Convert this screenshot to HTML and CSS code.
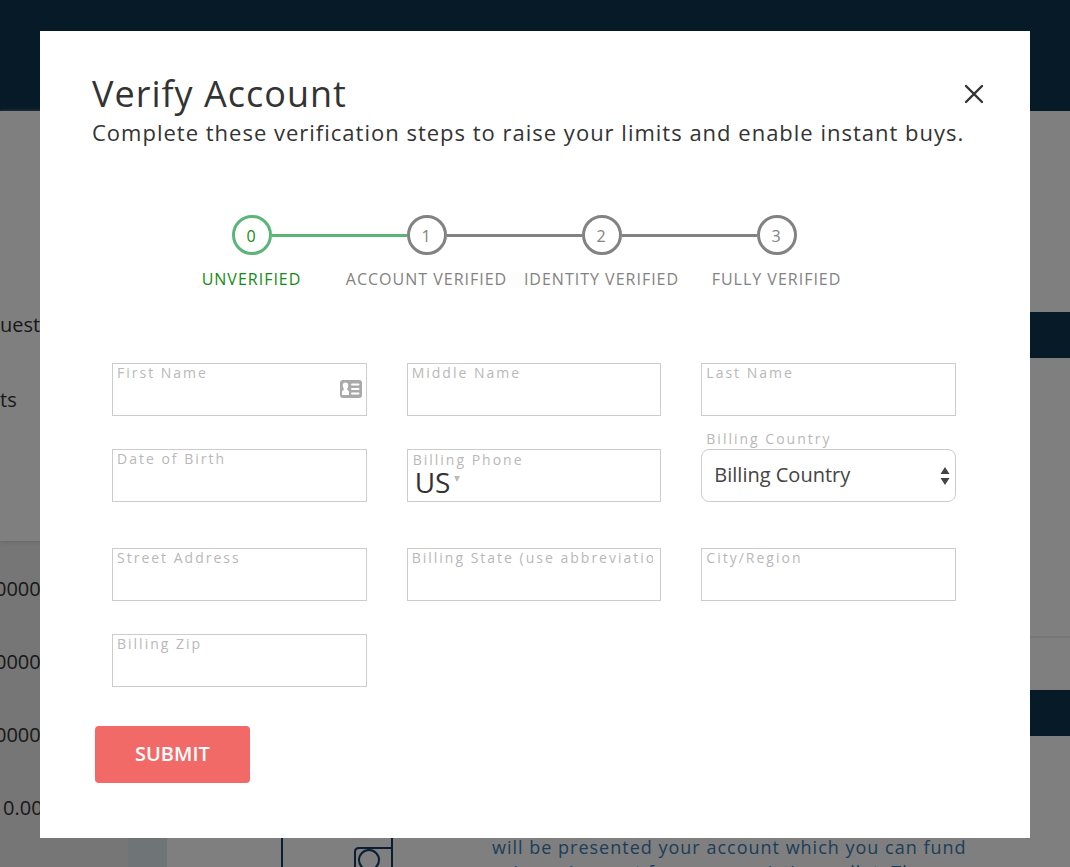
FILE: index.html
```html
<!DOCTYPE html>
<html lang="en">

<head>
    <meta charset="UTF-8">
    <meta name="viewport" content="width=device-width, initial-scale=1.0">
    <title>Verify Account</title>
    <link rel="stylesheet" href="styles.css">
</head>

<body>
    <!-- Page behind the dialog -->
    <div class="page">
        <header class="topbar"></header>
        <div class="columns">
            <aside class="sidebar">
                <nav class="side-nav">
                    <a href="#">uest</a>
                    <a href="#">ts</a>
                </nav>
                <ul class="balances">
                    <li>00000</li>
                    <li>00000</li>
                    <li>00000</li>
                    <li class="total">0.00</li>
                </ul>
            </aside>
            <div class="gutter"></div>
            <main class="content">
                <section class="panel panel-first">
                    <div class="panel-head"></div>
                </section>
                <section class="panel">
                    <div class="panel-head"></div>
                    <div class="panel-body">
                        <svg class="wallet" viewBox="0 0 114 60" fill="none" stroke="#123c64" stroke-width="2">
                            <path d="M2 0V60M112 0V60M112 20H79Q75 20 75 24V60" />
                            <circle cx="89" cy="32" r="10" />
                        </svg>
                        <p>will be presented your account which you can fund using coins sent from your existing wallet. The</p>
                    </div>
                </section>
            </main>
        </div>
    </div>

    <!-- Dialog -->
    <div class="overlay">
        <div class="modal" role="dialog" aria-labelledby="modalTitle">
            <div class="modal-header">
                <h1 id="modalTitle">Verify Account</h1>
                <button type="button" class="close" aria-label="Close">
                    <svg width="20" height="20" viewBox="0 0 20 20" fill="none" stroke="#333" stroke-width="2.4" stroke-linecap="round">
                        <path d="M2 2L18 18M18 2L2 18" />
                    </svg>
                </button>
            </div>
            <p class="subtitle">Complete these verification steps to raise your limits and enable instant buys.</p>

            <ol class="steps">
                <li class="step active"><span class="mark"><span class="circle">0</span></span>Unverified</li>
                <li class="step"><span class="mark"><span class="circle">1</span></span>Account verified</li>
                <li class="step"><span class="mark"><span class="circle">2</span></span>Identity verified</li>
                <li class="step"><span class="mark"><span class="circle">3</span></span>Fully verified</li>
            </ol>

            <form>
                <div class="fields">
                    <div class="field">
                        <label for="firstName">First Name</label>
                        <input type="text" id="firstName">
                        <svg class="card-icon" width="22" height="18" viewBox="0 0 22 18">
                            <rect width="22" height="18" rx="3" fill="#a9a9a9" />
                            <path fill="#fff" d="M5.500 2.500C7.300 2.500 8.300 3.700 8.300 5.500C8.300 6.800 7.800 7.500 7.300 8.200V10C8.500 10.500 9 11 9 12V15H2V12C2 11 2.500 10.500 3.700 10V8.200C3.200 7.500 2.700 6.800 2.700 5.500C2.700 3.700 3.700 2.500 5.500 2.500Z" />
                            <path stroke="#fff" stroke-width="2" stroke-linecap="round" d="M12 4.500H18.500M12 9H18.500M12 13.500H18.500" />
                        </svg>
                    </div>
                    <div class="field">
                        <label for="middleName">Middle Name</label>
                        <input type="text" id="middleName">
                    </div>
                    <div class="field">
                        <label for="lastName">Last Name</label>
                        <input type="text" id="lastName">
                    </div>
                    <div class="field">
                        <label for="birthDate">Date of Birth</label>
                        <input type="text" id="birthDate">
                    </div>
                    <div class="field phone">
                        <label for="phone">Billing Phone</label>
                        <select class="dial" aria-label="Phone country">
                            <option>US</option>
                        </select>
                        <svg width="8" height="7" viewBox="0 0 8 7">
                            <path fill="#bbb" d="M1 0H7L4 6Z" />
                        </svg>
                        <input type="tel" id="phone">
                    </div>
                    <div class="field country">
                        <label for="country">Billing Country</label>
                        <select id="country">
                            <option>Billing Country</option>
                        </select>
                        <svg class="arrows" width="10" height="18" viewBox="0 0 10 18">
                            <path fill="#444" d="M5 0L9.500 7H.5ZM.5 11H9.500L5 18Z" />
                        </svg>
                    </div>
                </div>
                <div class="fields">
                    <div class="field">
                        <label for="street">Street Address</label>
                        <input type="text" id="street">
                    </div>
                    <div class="field">
                        <label for="state">Billing State (use abbreviation)</label>
                        <input type="text" id="state">
                    </div>
                    <div class="field">
                        <label for="city">City/Region</label>
                        <input type="text" id="city">
                    </div>
                    <div class="field">
                        <label for="zip">Billing Zip</label>
                        <input type="text" id="zip">
                    </div>
                </div>
                <button type="submit" class="submit">SUBMIT</button>
            </form>
        </div>
    </div>
</body>

</html>
```
FILE: styles.css
```css
* {
    box-sizing: border-box;
}

body {
    margin: 0;
    font-family: "Open Sans", "Noto Sans", sans-serif;
    color: #333;
}

/* Page behind the dialog */
.page {
    height: 100vh;
    overflow: hidden;
    display: flex;
    flex-direction: column;
    background-color: #fff;
}

.topbar {
    flex: 0 0 111px;
    background-color: #0d344f;
}

.columns {
    flex: 1;
    display: grid;
    grid-template-columns: 128px 39px 1fr;
    min-height: 0;
}

.sidebar {
    background-color: #ececec;
    font-size: 20px;
    line-height: 28px;
}

.side-nav {
    display: flex;
    flex-direction: column;
    gap: 47px;
    height: 430px;
    padding-top: 200px;
    background-color: #fff;
    box-shadow: 0 1px 4px #ccc;
}

.side-nav a {
    color: #333;
    text-decoration: none;
}

.balances {
    display: flex;
    flex-direction: column;
    gap: 45px;
    list-style: none;
    margin: 34px 0 0 -5px;
    padding: 0;
}

.total {
    padding-left: 8px;
}

.gutter {
    background-color: #dee8ec;
}

.content {
    padding-top: 201px;
}

.panel-first {
    height: 326px;
    margin-bottom: 52px;
    border-bottom: 2px solid #ececec;
}

.panel-head {
    height: 46px;
    background-color: #0d344f;
}

.panel-body {
    display: flex;
    align-items: flex-start;
    gap: 98px;
    padding: 92px 100px 0 113px;
}

.panel-body p {
    margin: 7px 0 0;
    font-size: 18px;
    line-height: 25px;
    letter-spacing: 1px;
    color: #3a7cb4;
}

.wallet {
    flex: 0 0 114px;
}

/* Dialog */
.overlay {
    position: fixed;
    inset: 0;
    overflow: auto;
    padding: 31px 40px;
    background-color: rgba(0, 0, 0, 0.5);
}

.modal {
    padding: 40px 46px 55px 52px;
    background-color: #fff;
}

.modal-header {
    display: flex;
    justify-content: space-between;
    align-items: center;
}

h1 {
    margin: 0;
    font-size: 36px;
    font-weight: 400;
    line-height: 46px;
    letter-spacing: 1px;
}

.close {
    display: flex;
    padding: 0;
    border: 0;
    background: none;
}

.subtitle {
    margin: 0;
    font-size: 22px;
    line-height: 30px;
    letter-spacing: 1px;
}

/* Steps */
.steps {
    display: flex;
    list-style: none;
    margin: 68px 120px 0 72px;
    padding: 0;
}

.step {
    flex: 1 0 0;
    font-size: 16px;
    line-height: 24px;
    letter-spacing: 1px;
    text-align: center;
    text-transform: uppercase;
    white-space: nowrap;
    color: #828282;
}

.mark {
    display: flex;
    align-items: center;
    margin-bottom: 12px;
}

.mark::before,
.mark::after {
    content: "";
    flex: 1;
    height: 3px;
    background-color: #828282;
}

.step:first-child .mark::before,
.step:last-child .mark::after {
    background-color: transparent;
}

.circle {
    width: 40px;
    height: 40px;
    border: 3px solid #828282;
    border-radius: 50%;
    line-height: 36px;
}

.active {
    color: #138a13;
}

.active .circle {
    border-color: #5bb578;
}

.active .mark::after,
.active + .step .mark::before {
    background-color: #5bb578;
}

/* Form */
form {
    padding: 72px 28px 0 20px;
}

.fields {
    display: grid;
    grid-template-columns: repeat(3, 1fr);
    gap: 33px 40px;
    margin-bottom: 46px;
}

.field {
    position: relative;
    height: 53px;
}

.field label {
    position: absolute;
    top: 0;
    left: 5px;
    right: 8px;
    overflow: hidden;
    font-size: 14px;
    line-height: 20px;
    letter-spacing: 2px;
    white-space: nowrap;
    color: #b8b8b8;
}

.field input {
    width: 100%;
    height: 100%;
    padding: 20px 5px 4px;
    border: 1px solid #ccc;
    background: none;
    font: inherit;
}

.card-icon {
    position: absolute;
    top: 17px;
    right: 5px;
}

.phone {
    display: flex;
    gap: 2px;
    padding: 17px 6px 0 7px;
    border: 1px solid #ccc;
}

.phone input {
    flex: 1;
    min-width: 0;
    height: 30px;
    padding: 0;
    border: 0;
}

.phone svg {
    margin-top: 9px;
}

.dial {
    appearance: none;
    height: 30px;
    padding: 0;
    border: 0;
    background: none;
    font: inherit;
    font-size: 28px;
    line-height: 30px;
    color: #333;
}

.country label {
    top: -20px;
}

.country select {
    appearance: none;
    width: 100%;
    height: 100%;
    padding: 0 12px 2px;
    border: 1px solid #ccc;
    border-radius: 8px;
    background: none;
    font: inherit;
    font-size: 20px;
    color: #444;
}

.arrows {
    position: absolute;
    top: 18px;
    right: 6px;
    pointer-events: none;
}

.submit {
    display: block;
    margin: -7px 0 0 -17px;
    padding: 13px 40px 15px;
    border: 0;
    border-radius: 4px;
    background-color: #f16a68;
    font: inherit;
    font-size: 20px;
    font-weight: 600;
    line-height: 29px;
    color: #fff;
}
```
